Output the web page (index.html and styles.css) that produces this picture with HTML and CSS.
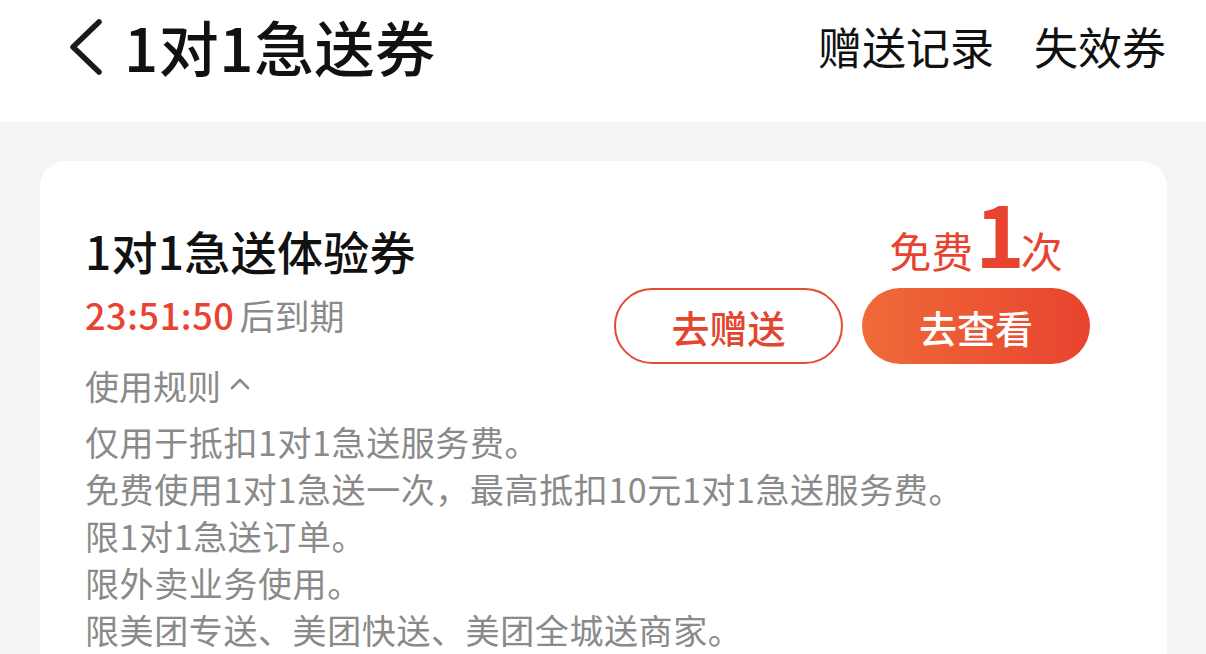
FILE: index.html
```html
<!DOCTYPE html>
<html lang="zh-CN">
<head>
<meta charset="utf-8">
<title>1对1急送券</title>
<link rel="stylesheet" href="styles.css">
</head>
<body>
<header class="topbar">
  <div class="topbar-left">
    <svg class="back" width="40" height="58" viewBox="0 0 40 58"><polyline points="33,4 7,29 33,54" fill="none" stroke="#1a1a1a" stroke-width="5.5" stroke-linecap="round" stroke-linejoin="round"/></svg>
    <h1 class="title">1对1急送券</h1>
  </div>
  <nav class="topbar-links">
    <span class="link">赠送记录</span>
    <span class="link">失效券</span>
  </nav>
</header>
<main class="page">
  <section class="card">
    <div class="card-top">
      <div class="card-info">
        <div class="card-title">1对1急送体验券</div>
        <div class="expire"><span class="countdown">23:51:50</span><span class="expire-label">后到期</span></div>
      </div>
      <div class="card-actions">
        <div class="price"><span class="price-text">免费</span><span class="price-num">1</span><span class="price-text">次</span></div>
        <button class="btn btn-outline">去赠送</button>
        <button class="btn btn-fill">去查看</button>
      </div>
    </div>
    <div class="rules-head">使用规则<svg class="up" width="22" height="14" viewBox="0 0 22 14"><polyline points="3,11 11,3 19,11" fill="none" stroke="#8a8a8a" stroke-width="2.6" stroke-linecap="round" stroke-linejoin="round"/></svg></div>
    <ul class="rules">
      <li>仅用于抵扣1对1急送服务费。</li>
      <li>免费使用1对1急送一次，最高抵扣10元1对1急送服务费。</li>
      <li>限1对1急送订单。</li>
      <li>限外卖业务使用。</li>
      <li>限美团专送、美团快送、美团全城送商家。</li>
    </ul>
  </section>
</main>
</body>
</html>
```

FILE: styles.css
```css
* { box-sizing: border-box; }
html, body { margin: 0; padding: 0; }
body {
  font-family: "Noto Sans CJK SC", "Noto Sans", sans-serif;
  background: #f4f4f4;
  color: #111;
  width: 1206px;
  overflow: hidden;
}
.topbar {
  height: 122px;
  background: #fff;
  display: flex;
  align-items: center;
  justify-content: space-between;
  padding: 0 40px 30px 66px;
}
.topbar-left {
  display: flex;
  align-items: center;
  gap: 18px;
}
.back { display: block; margin-top: 2px; }
.title {
  margin: 0;
  font-size: 60px;
  font-weight: 500;
  line-height: 70px;
  color: #111;
  letter-spacing: 0.5px;
}
.topbar-links {
  display: flex;
  gap: 40px;
}
.link {
  font-size: 44px;
  line-height: 60px;
  color: #111;
}
.page {
  padding: 39px 39px 0 40px;
}
.card {
  background: #fff;
  border-radius: 26px;
  padding: 61px 77px 40px 45px;
  min-height: 700px;
}
.card-top {
  display: flex;
  justify-content: space-between;
}
.card-info {
  display: flex;
  flex-direction: column;
}
.card-title {
  font-size: 46px;
  font-weight: 500;
  line-height: 56px;
  letter-spacing: 0.3px;
}
.expire {
  margin-top: 14px;
  line-height: 44px;
  display: flex;
  align-items: baseline;
  gap: 5px;
}
.countdown {
  font-size: 36px;
  color: #e8432f;
  font-weight: 500;
  letter-spacing: 0.6px;
}
.expire-label {
  font-size: 35px;
  color: #8a8a8a;
}
.card-actions {
  display: grid;
  grid-template-columns: 229px 228px;
  column-gap: 19px;
  row-gap: 10px;
}
.price {
  grid-column: 2;
  height: 56px;
  margin-top: -18px;
  margin-bottom: 18px;
  display: flex;
  align-items: baseline;
  justify-content: center;
  color: #e8432f;
  line-height: 56px;
}
.price-text {
  font-size: 42px;
}
.price-num {
  font-size: 84px;
  font-weight: 700;
  margin: 0 -4px 0 2px;
  line-height: 56px;
}
.btn {
  height: 76px;
  border-radius: 38px;
  font-family: inherit;
  font-size: 38px;
  font-weight: 500;
  padding: 0;
  cursor: pointer;
  grid-row: 2;
}
.btn-outline {
  grid-column: 1;
  background: #fff;
  border: 2.5px solid #e34b33;
  color: #e3452f;
}
.btn-fill {
  grid-column: 2;
  border: none;
  color: #fff;
  background: linear-gradient(90deg, #ef6b38 0%, #e8432f 100%);
}
.rules-head {
  display: flex;
  align-items: center;
  gap: 8px;
  font-size: 34px;
  line-height: 44px;
  color: #8a8a8a;
}
.up { display: block; margin-top: -4px; }
.rules {
  list-style: none;
  margin: 10px 0 0;
  padding: 0;
  font-size: 34px;
  line-height: 47px;
  color: #8a8a8a;
  font-weight: 400;
  letter-spacing: 0.6px;
}
.rules li { margin: 0; }
```
